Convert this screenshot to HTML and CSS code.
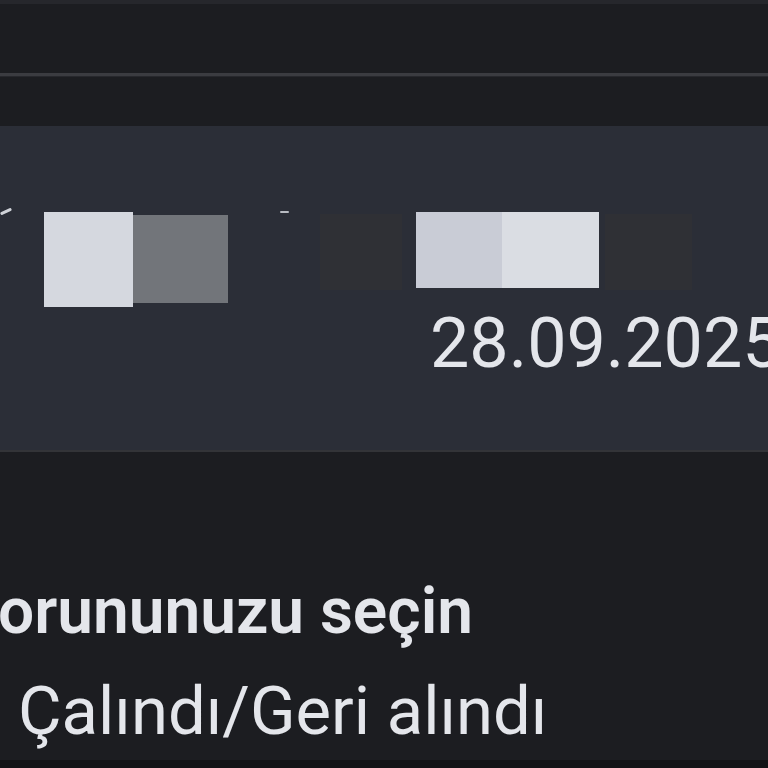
FILE: index.html
```html
<!DOCTYPE html>
<html lang="tr">
<head>
<meta charset="utf-8">
<link rel="stylesheet" href="styles.css">
</head>
<body>
<div class="screen">
  <div class="topbar">
    <div class="topstrip"></div>
    <div class="divider"></div>
  </div>
  <div class="card">
    <div class="blocks">
      <div class="mark"></div>
      <div class="redact r1"><div class="half a"></div><div class="half b"></div></div>
      <div class="mark m2"></div>
      <div class="shade s1"></div>
      <div class="redact r2"><div class="half c"></div><div class="half d"></div></div>
      <div class="shade s2"></div>
    </div>
    <div class="date">28.09.2025</div>
  </div>
  <div class="content">
    <div class="title">orununuzu seçin</div>
    <div class="option">Çalındı/Geri alındı</div>
  </div>
  <div class="bottomstrip"></div>
</div>
</body>
</html>
```

FILE: styles.css
```css
html, body {
  margin: 0;
  padding: 0;
  background: #1c1d21;
}
.screen {
  width: 768px;
  height: 768px;
  overflow: hidden;
  display: flex;
  flex-direction: column;
  font-family: Roboto, "Noto Sans", sans-serif;
  color: #e4e6eb;
}
.topbar {
  height: 126px;
  display: flex;
  flex-direction: column;
}
.topstrip {
  height: 4px;
  background: #26272c;
}
.divider {
  margin-top: 69px;
  height: 3px;
  background: #3b3c41;
  border-bottom: 1px solid #27282d;
}
.card {
  background: #2b2e37;
  border-bottom: 2px solid #333438;
  display: flex;
  flex-direction: column;
  padding-top: 86px;
  box-sizing: border-box;
  height: 326px;
}
.blocks {
  height: 96px;
  display: flex;
  align-items: flex-start;
}
.mark {
  width: 12px;
  height: 3px;
  margin-top: -2px;
  background: #cfd2d8;
  transform: rotate(-25deg);
  border-radius: 2px;
  flex: none;
}
.mark.m2 {
  width: 9px;
  height: 2px;
  margin-left: 52px;
  margin-top: -1px;
  transform: none;
  background: #b9bcc3;
}
.redact {
  display: flex;
  flex: none;
}
.r1 {
  margin-left: 32px;
  width: 184px;
}
.half.a {
  width: 89px;
  height: 95px;
  background: #d5d8df;
}
.half.b {
  width: 95px;
  height: 88px;
  margin-top: 3px;
  background: #72757a;
}
.shade {
  height: 76px;
  background: #2f3035;
  margin-top: 2px;
  flex: none;
}
.s1 {
  margin-left: 31px;
  width: 82px;
}
.r2 {
  margin-left: 14px;
  width: 183px;
}
.half.c {
  width: 86px;
  height: 76px;
  background: #c9ccd6;
}
.half.d {
  width: 97px;
  height: 76px;
  background: #dadde3;
}
.s2 {
  margin-left: 6px;
  width: 87px;
}
.date {
  margin-left: 430px;
  font-size: 70px;
  line-height: 70px;
  white-space: nowrap;
}
.content {
  flex: 1;
  padding-top: 110px;
}
.title {
  margin-left: -2px;
  font-size: 64px;
  font-weight: 600;
  line-height: 100px;
  white-space: nowrap;
}
.option {
  margin-left: 18px;
  font-size: 67px;
  line-height: 98px;
  white-space: nowrap;
}
.bottomstrip {
  height: 8px;
  background: #121316;
}
```
